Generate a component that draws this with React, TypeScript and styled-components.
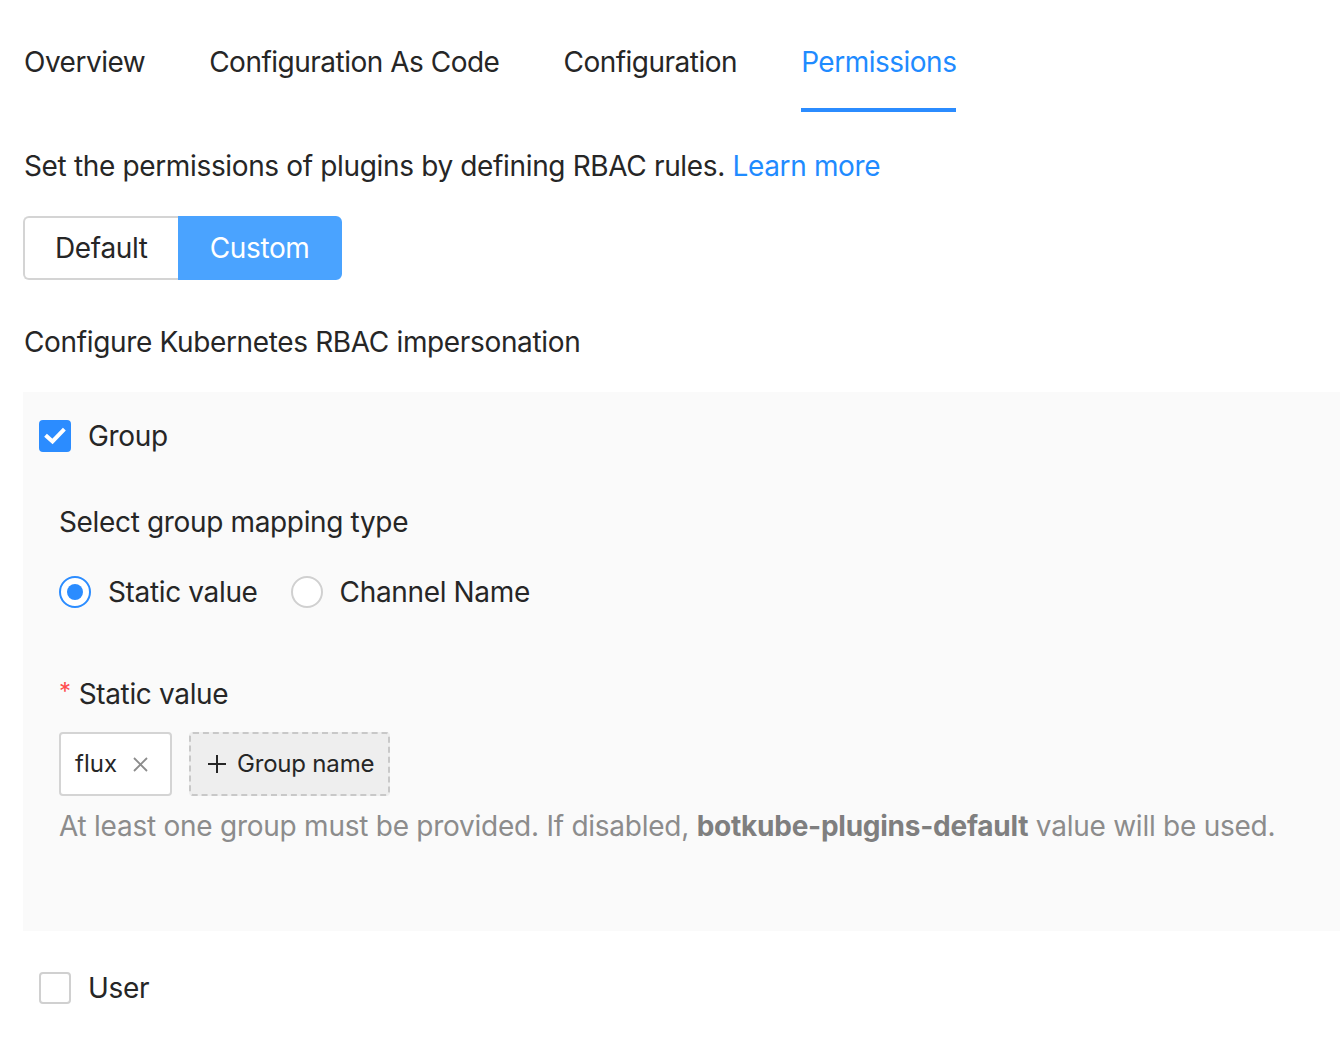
import React from "react";
import styled, { createGlobalStyle } from "styled-components";

const Global = createGlobalStyle`
  html, body { margin: 0; padding: 0; background: #ffffff; }
  body { font-family: Inter, "Noto Sans", "Liberation Sans", sans-serif; color: #262626; }
  * { box-sizing: border-box; }
`;

const Page = styled.div`
  width: 1340px;
  height: 1056px;
  overflow: hidden;
  padding: 16px 0 0 23px;
  font-size: 28px;
  line-height: 44px;
  letter-spacing: -0.35px;
`;

const TabNav = styled.nav`
  display: flex;
  gap: 64px;
  padding-left: 1px;
`;

const Tab = styled.div<{ $active?: boolean }>`
  padding: 24px 0 24px;
  line-height: 44px;
  font-size: 28px;
  letter-spacing: -0.5px;
  color: ${(p) => (p.$active ? "#1f8bff" : "#262626")};
  border-bottom: 4px solid ${(p) => (p.$active ? "#2b8cff" : "transparent")};
`;

const Desc = styled.p`
  margin: 32px 0 0 1px;
  font-size: 28px;
  line-height: 44px;
`;

const Link = styled.a`
  color: #1f8bff;
  text-decoration: none;
`;

const Segmented = styled.div`
  display: flex;
  margin-top: 28px;
`;

const SegButton = styled.button<{ $active?: boolean; $pos: "left" | "right" }>`
  height: 64px;
  padding: 0 30px;
  font-family: inherit;
  font-size: 28px;
  letter-spacing: -0.35px;
  border: 2px solid ${(p) => (p.$active ? "#4aa3ff" : "#d4d4d4")};
  background: ${(p) => (p.$active ? "#4aa3ff" : "#ffffff")};
  color: ${(p) => (p.$active ? "#ffffff" : "#262626")};
  border-radius: ${(p) => (p.$pos === "left" ? "6px 0 0 6px" : "0 6px 6px 0")};
  ${(p) => (p.$pos === "left" ? "border-right: none;" : "")}
  cursor: pointer;
`;

const SectionTitle = styled.div`
  margin-top: 40px;
  padding-left: 1px;
`;

const Panel = styled.section`
  margin-top: 28px;
  background: #fafafa;
  padding: 22px 0 83px 16px;
`;

const CheckRow = styled.label`
  display: flex;
  align-items: center;
  gap: 17px;
  height: 44px;
`;

const CheckBox = styled.span<{ $checked?: boolean }>`
  width: 32px;
  height: 32px;
  border-radius: 4px;
  display: flex;
  align-items: center;
  justify-content: center;
  background: ${(p) => (p.$checked ? "#2b8cff" : "#ffffff")};
  border: 2px solid ${(p) => (p.$checked ? "#2b8cff" : "#d0d0d0")};
`;

const Inner = styled.div`
  padding-left: 20px;
`;

const FieldLabel = styled.div<{ $top: number }>`
  margin-top: ${(p) => p.$top}px;
  display: flex;
  align-items: center;
`;

const Required = styled.span`
  color: #ff4d4f;
  font-size: 24px;
  margin-right: 8px;
  position: relative;
  top: -2px;
`;

const RadioGroup = styled.div`
  display: flex;
  gap: 33px;
  margin-top: 26px;
`;

const RadioItem = styled.label`
  display: flex;
  align-items: center;
  gap: 17px;
`;

const RadioCircle = styled.span<{ $checked?: boolean }>`
  width: 32px;
  height: 32px;
  border-radius: 50%;
  background: #ffffff;
  border: 2px solid ${(p) => (p.$checked ? "#2b8cff" : "#d0d0d0")};
  display: flex;
  align-items: center;
  justify-content: center;
  &::after {
    content: "";
    width: 16px;
    height: 16px;
    border-radius: 50%;
    background: ${(p) => (p.$checked ? "#2b8cff" : "transparent")};
  }
`;

const TagRow = styled.div`
  display: flex;
  gap: 17px;
  margin-top: 16px;
`;

const Tag = styled.span`
  height: 64px;
  display: flex;
  align-items: center;
  gap: 16px;
  padding: 0 22px 0 14px;
  border: 2px solid #d4d4d4;
  border-radius: 4px;
  background: #ffffff;
  font-size: 24px;
  letter-spacing: 0;
  color: #262626;
`;

const AddTag = styled.span`
  height: 64px;
  display: flex;
  align-items: center;
  gap: 10px;
  padding: 0 14px 0 16px;
  border: 2px dashed #c8c8c8;
  border-radius: 4px;
  background: #eeeeee;
  font-size: 24px;
  letter-spacing: -0.2px;
  color: #262626;
`;

const Help = styled.div`
  margin-top: 8px;
  color: #8c8c8c;
  font-size: 28px;
  line-height: 44px;
  letter-spacing: -0.25px;
  b { font-weight: 700; color: #7f7f7f; }
`;

const UserRow = styled.div`
  margin-top: 35px;
  padding-left: 16px;
`;

export default function App() {
  return (
    <>
      <Global />
      <Page>
        <TabNav>
          <Tab>Overview</Tab>
          <Tab>Configuration As Code</Tab>
          <Tab>Configuration</Tab>
          <Tab $active>Permissions</Tab>
        </TabNav>
        <Desc>
          Set the permissions of plugins by defining RBAC rules. <Link href="#">Learn more</Link>
        </Desc>
        <Segmented>
          <SegButton $pos="left">Default</SegButton>
          <SegButton $pos="right" $active>Custom</SegButton>
        </Segmented>
        <SectionTitle>Configure Kubernetes RBAC impersonation</SectionTitle>
        <Panel>
          <CheckRow>
            <CheckBox $checked>
              <svg width="22" height="18" viewBox="0 0 22 18">
                <path d="M3 9.5 L8.5 14.5 L19 3.5" fill="none" stroke="#fff" strokeWidth="4" strokeLinecap="square" />
              </svg>
            </CheckBox>
            Group
          </CheckRow>
          <Inner>
            <FieldLabel $top={42}>Select group mapping type</FieldLabel>
            <RadioGroup>
              <RadioItem>
                <RadioCircle $checked />
                Static value
              </RadioItem>
              <RadioItem>
                <RadioCircle />
                Channel Name
              </RadioItem>
            </RadioGroup>
            <FieldLabel $top={58}>
              <Required>*</Required>Static value
            </FieldLabel>
            <TagRow>
              <Tag>
                flux
                <svg width="15" height="15" viewBox="0 0 15 15">
                  <path d="M1 1 L14 14 M14 1 L1 14" stroke="#8c8c8c" strokeWidth="1.8" />
                </svg>
              </Tag>
              <AddTag>
                <svg width="20" height="20" viewBox="0 0 20 20">
                  <path d="M10 1 V19 M1 10 H19" stroke="#262626" strokeWidth="2" />
                </svg>
                Group name
              </AddTag>
            </TagRow>
            <Help>
              At least one group must be provided. If disabled, <b>botkube-plugins-default</b> value will be used.
            </Help>
          </Inner>
        </Panel>
        <UserRow>
          <CheckRow>
            <CheckBox />
            User
          </CheckRow>
        </UserRow>
      </Page>
    </>
  );
}
